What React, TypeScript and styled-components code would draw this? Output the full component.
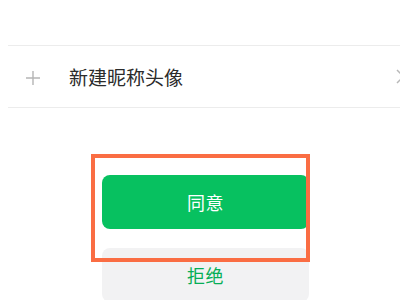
import React from "react";
import styled, { createGlobalStyle } from "styled-components";

const Global = createGlobalStyle`
  html, body { margin: 0; padding: 0; background: #ffffff; }
  body {
    width: 400px; height: 300px; overflow: hidden;
    font-family: "Noto Sans CJK SC", "Noto Sans", sans-serif;
  }
`;

const Page = styled.div`
  width: 400px;
  height: 300px;
  overflow: hidden;
  background: #ffffff;
  display: flex;
  flex-direction: column;
`;

const List = styled.div`
  margin-top: 45px;
  margin-left: 8px;
  border-top: 1px solid #ececec;
  border-bottom: 1px solid #ececec;
`;

const Row = styled.div`
  height: 61px;
  display: flex;
  align-items: center;
  padding-left: 18px;
  overflow: hidden;
`;

const PlusIcon = styled.svg`
  width: 14px;
  height: 14px;
  flex: none;
  margin-top: 2px;
`;

const Label = styled.span`
  margin-left: 29px;
  font-size: 19px;
  color: #2b2b2b;
  line-height: 1;
  flex: 1;
`;

const Chevron = styled.svg`
  width: 9px;
  height: 15px;
  flex: none;
  margin-right: -5px;
`;

const Actions = styled.div`
  position: relative;
  margin-top: 67px;
  margin-left: 102px;
  width: 207px;
  display: flex;
  flex-direction: column;
  gap: 19px;
`;

const Button = styled.div<{ $primary?: boolean }>`
  height: 54px;
  border-radius: 8px;
  display: flex;
  align-items: center;
  justify-content: center;
  font-size: 18px;
  letter-spacing: 0.5px;
  background: ${(p) => (p.$primary ? "#07c160" : "#f2f2f3")};
  color: ${(p) => (p.$primary ? "#ffffff" : "#06ae56")};
`;

const Highlight = styled.div`
  position: absolute;
  left: -11px;
  top: -21px;
  width: 219px;
  height: 108px;
  box-sizing: border-box;
  border: 4px solid #fa6d43;
  pointer-events: none;
`;

export default function App() {
  return (
    <>
      <Global />
      <Page>
        <List>
          <Row>
            <PlusIcon viewBox="0 0 14 14">
              <path d="M7 0v14M0 7h14" stroke="#b5b5b5" strokeWidth="1.4" fill="none" />
            </PlusIcon>
            <Label>新建昵称头像</Label>
            <Chevron viewBox="0 0 9 15">
              <path d="M1 1l6.5 6.5L1 14" stroke="#b8b8b8" strokeWidth="1.5" fill="none" />
            </Chevron>
          </Row>
        </List>
        <Actions>
          <Button $primary>同意</Button>
          <Button>拒绝</Button>
          <Highlight />
        </Actions>
      </Page>
    </>
  );
}
